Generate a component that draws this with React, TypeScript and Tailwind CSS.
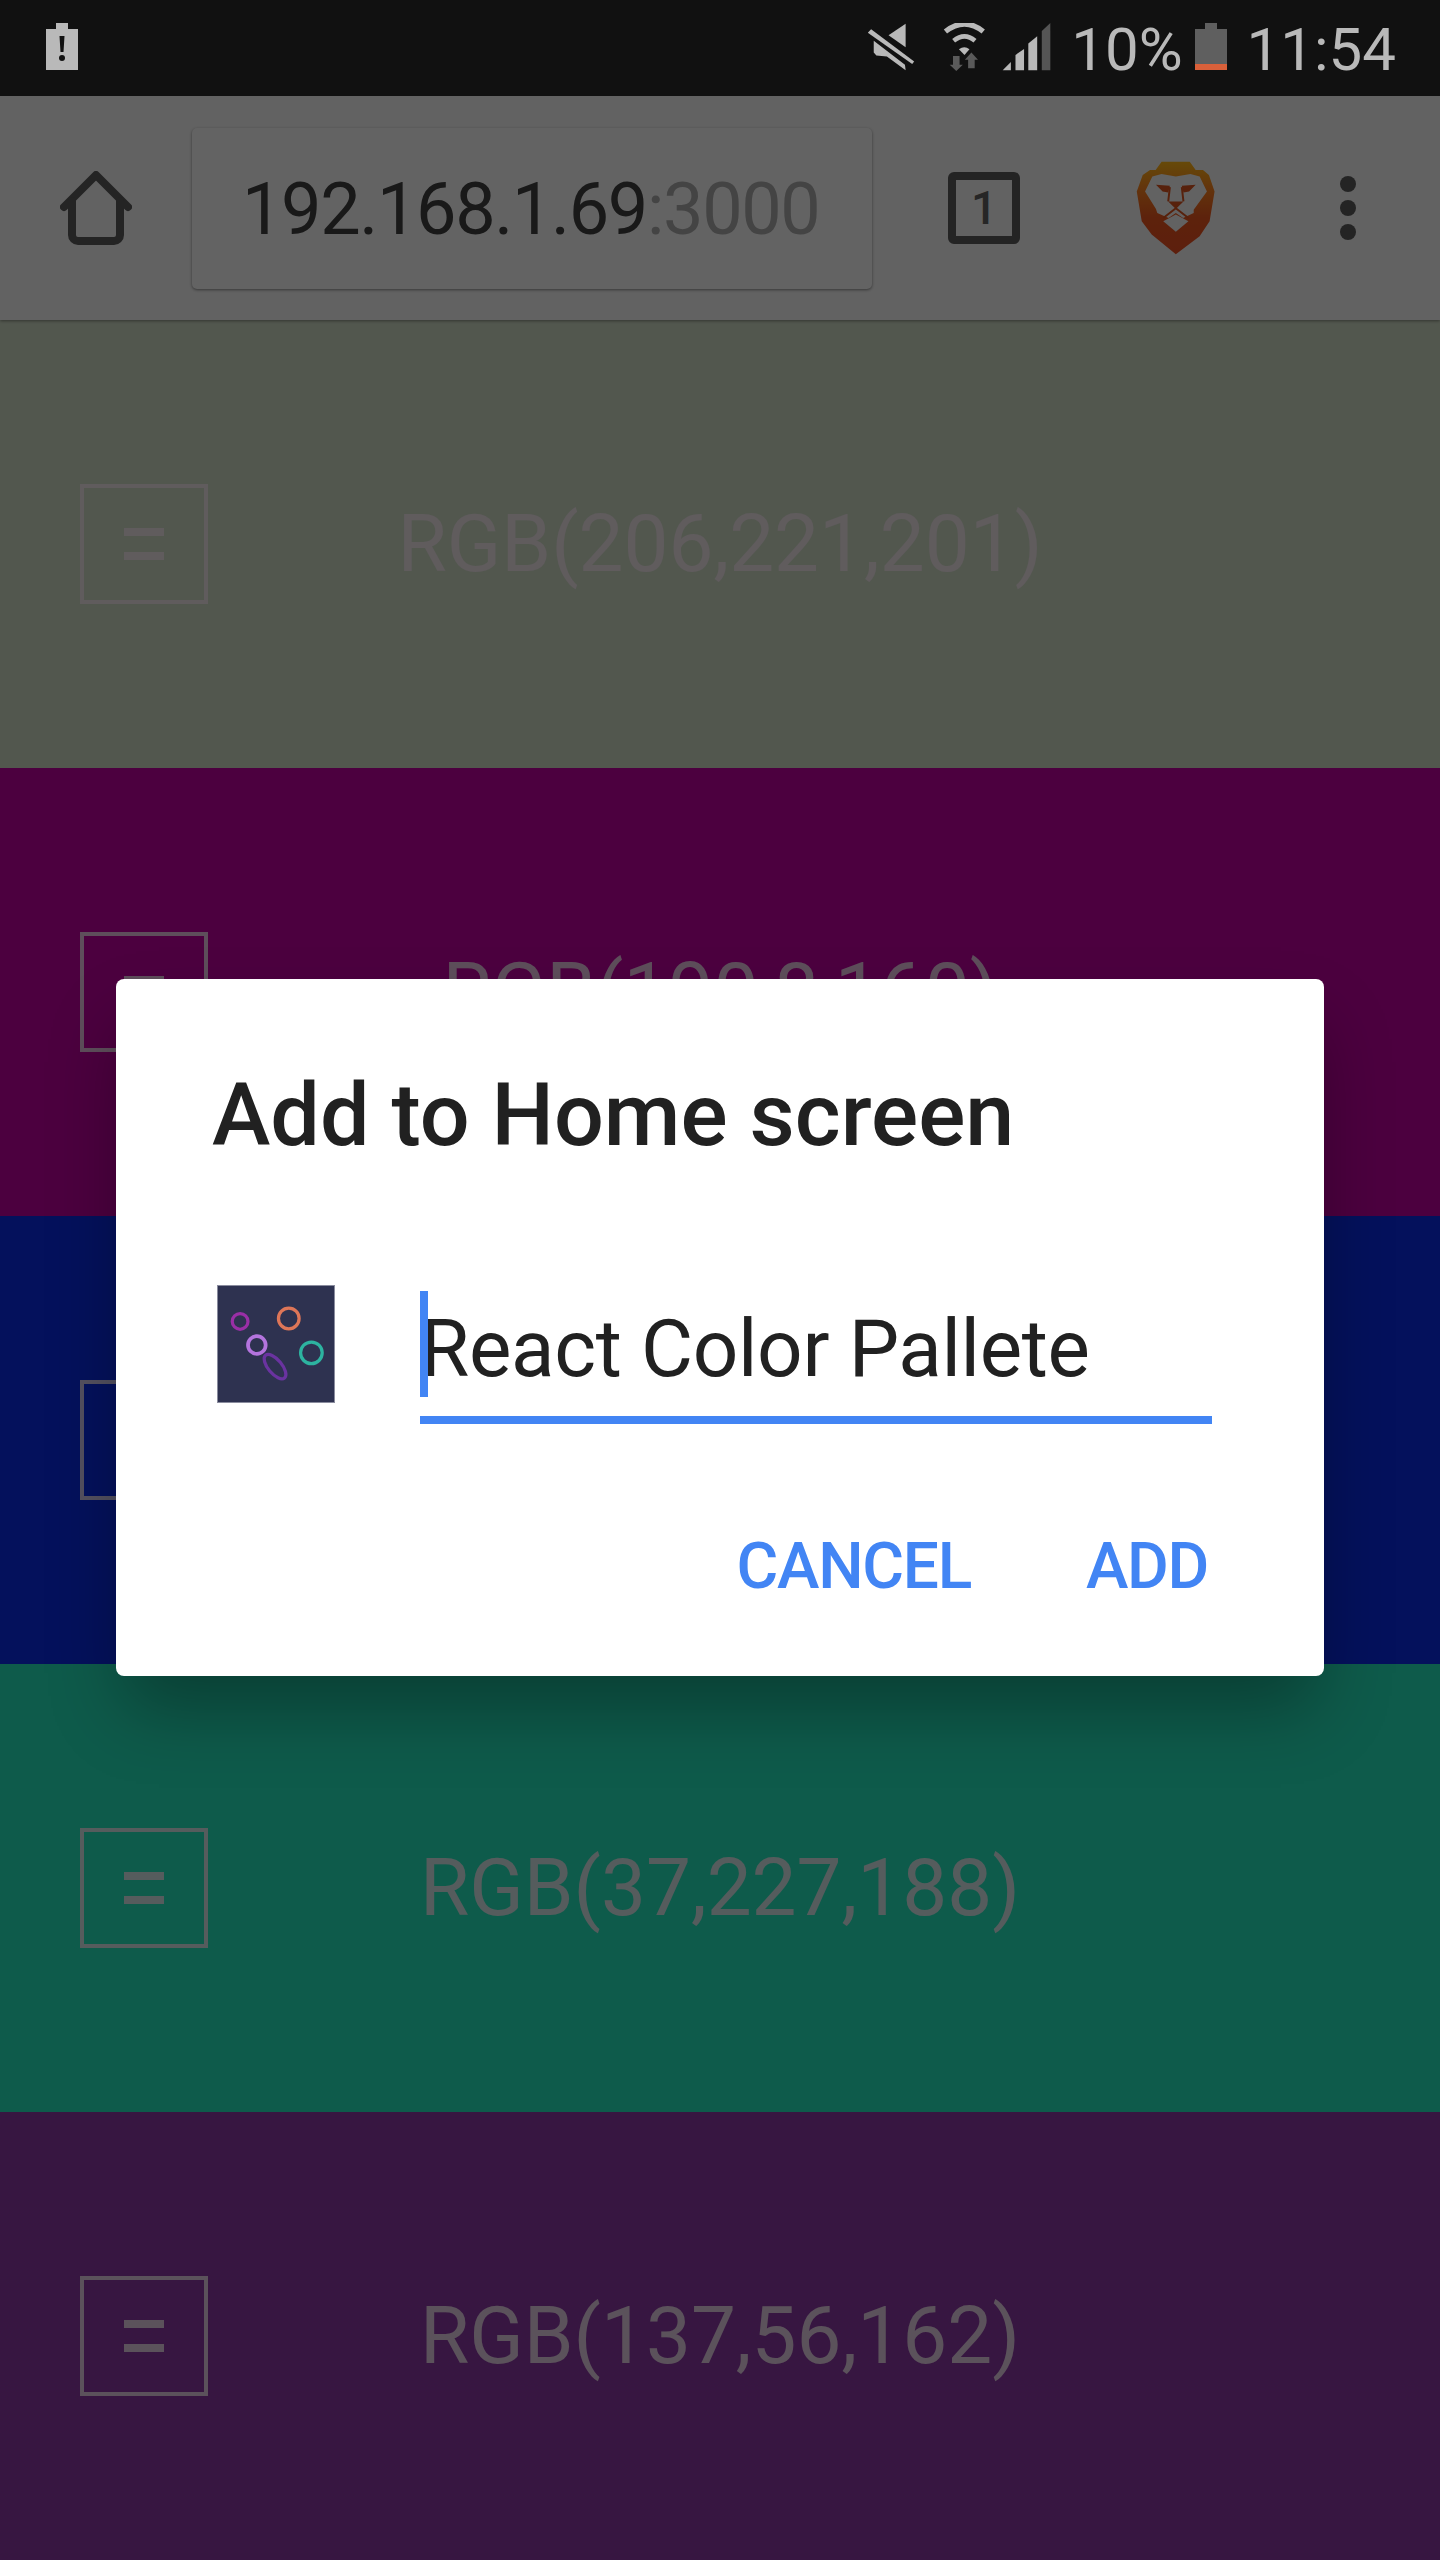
const bands = [
  { bg: "bg-[#cedac4]", text: "RGB(206,221,201)" },
  { bg: "bg-[#be009f]", text: "RGB(190,8,160)" },
  { bg: "bg-[#0c2be6]", text: "RGB(2,38,224)" },
  { bg: "bg-[#25e3bc]", text: "RGB(37,227,188)" },
  { bg: "bg-[#8938a2]", text: "RGB(137,56,162)" },
];

function BatteryAlert() {
  return (
    <svg width="32" height="47" viewBox="0 0 32 47">
      <path d="M10 0h12v6h10v41H0V6h10z" fill="#b9b9b9" />
      <path d="M13.5 13h5l-1 16h-3z" fill="#111" />
      <circle cx="16" cy="35" r="3" fill="#111" />
    </svg>
  );
}

function Mute() {
  return (
    <svg width="48" height="48" viewBox="50 38 145 146" fill="#b9b9b9">
      <path d="M115 75l52-35v72z" />
      <path d="M52 68l10-11 131 98-6 8z" />
      <path d="M70 92l95 73 2 17-57-42-32-3-8-9z" />
    </svg>
  );
}

function Wifi() {
  return (
    <svg width="43" height="48" viewBox="280 38 130 146" fill="none">
      <path d="M287 64Q345 18 402 64" stroke="#b9b9b9" strokeWidth="16" />
      <path d="M312 92Q345 65 377 92" stroke="#b9b9b9" strokeWidth="14" />
      <path d="M328 118Q345 106 360 118L345 135z" fill="#b9b9b9" />
      <path d="M310 138h20v27h10l-20 19-20-19h10z" fill="#5a5a5a" />
      <path d="M366 128l20 22h-10v26h-20v-26h-10z" fill="#5a5a5a" />
    </svg>
  );
}

function Signal() {
  return (
    <svg width="49" height="48" viewBox="455 38 149 146">
      <path d="M457 182l25-25v25z" fill="#b9b9b9" />
      <path d="M496 182v-47l26-18v65z" fill="#b9b9b9" />
      <path d="M535 182v-82l27-22v104z" fill="#b9b9b9" />
      <path d="M576 182V62l26-24v144z" fill="#555" />
    </svg>
  );
}

function Battery() {
  return (
    <svg width="32" height="47" viewBox="0 0 32 47">
      <path d="M10 0h12v6h10v35H0V6h10z" fill="#5f5f5f" />
      <path d="M0 41h32v6H0z" fill="#d9603a" />
    </svg>
  );
}

function HomeIcon() {
  return (
    <svg width="72" height="74" viewBox="0 0 72 74" fill="none" stroke="#5a5a5a" strokeWidth="8" strokeLinejoin="round" strokeLinecap="round">
      <path d="M4 36L36 4l32 32" />
      <path d="M12 30v34a6 6 0 0 0 6 6h36a6 6 0 0 0 6-6V30" />
    </svg>
  );
}

function TabIcon() {
  return (
    <div className="w-[72px] h-[72px] border-[8px] border-[#5a5a5a] rounded-md flex items-center justify-center">
      <span className="text-[46px] leading-none font-medium text-[#5f5f5f]">1</span>
    </div>
  );
}

function Lion() {
  return (
    <svg width="79" height="94" viewBox="48 33 238 284">
      <defs>
        <linearGradient id="lion" x1="0" y1="0" x2="0" y2="1">
          <stop offset="0" stopColor="#ffb816" />
          <stop offset="0.3" stopColor="#f7801f" />
          <stop offset="0.6" stopColor="#e8561f" />
          <stop offset="1" stopColor="#e84e22" />
        </linearGradient>
      </defs>
      <path d="M125 35h85l18 25h22l18 15 17 50-15 90-30 45-72 55-73-60-30-40-15-90 18-50 22-15h17z" fill="url(#lion)" />
      <path d="M97 80l28-8 43 8 44-8 28 8 22 45-40 55v10l-32 15-22-15-22 15-34-15-4-12-33-53z" fill="#f5f5f5" />
      <path d="M108 105l42 3-5 20-17-3zM228 105l-42 3 5 20 17-3z" fill="#d9531e" />
      <path d="M145 155h46l-23 23z" fill="#d9531e" />
      <path d="M150 112l-5 43M186 112l5 43" stroke="#d9531e" strokeWidth="6" fill="none" />
      <path d="M168 176l-38 29M168 176l38 29" stroke="#d9531e" strokeWidth="6" fill="none" />
      <path d="M130 215l38-20 38 20-38 32z" fill="#f5f5f5" />
    </svg>
  );
}

function AppIcon() {
  return (
    <svg width="118" height="118" viewBox="0 0 118 118" fill="none" strokeWidth="3.3" className="border border-[#8a8c9e] bg-[#2e3250]">
      <circle cx="22.5" cy="36" r="8" stroke="#9a2fa6" />
      <circle cx="72" cy="33" r="10.5" stroke="#de7658" />
      <circle cx="39.5" cy="60" r="9" stroke="#b474de" strokeWidth="3.8" />
      <circle cx="95" cy="68" r="11" stroke="#2db3a0" />
      <ellipse cx="58" cy="82" rx="15" ry="7" transform="rotate(50 58 82)" stroke="#6a33a0" />
    </svg>
  );
}

export default function App() {
  return (
    <div className="relative w-[1440px] h-[2560px] overflow-hidden font-['Roboto',sans-serif]">
      <div className="relative isolate">
        <div className="h-[96px]" />
        <div className="h-[224px] bg-[#f5f5f5] flex items-center pl-[60px] shadow-[0_1px_3px_rgba(0,0,0,0.4)] relative z-10">
          <HomeIcon />
          <div className="ml-[60px] w-[680px] h-[161px] rounded-[5px] bg-[#f8f8f8] shadow-[0_1px_3px_rgba(0,0,0,0.45)] flex items-center pl-[50px] pt-[3px] text-[72px] tracking-[-1.35px] text-[#404040] whitespace-nowrap">
            192.168.1.69<span className="text-[#aaaaaa]">:3000</span>
          </div>
          <div className="ml-[76px]">
            <TabIcon />
          </div>
          <div className="ml-[116px]">
            <Lion />
          </div>
          <div className="ml-[125px] flex flex-col gap-2">
            <div className="w-4 h-4 rounded-full bg-[#5a5a5a]" />
            <div className="w-4 h-4 rounded-full bg-[#5a5a5a]" />
            <div className="w-4 h-4 rounded-full bg-[#5a5a5a]" />
          </div>
        </div>
        {bands.map((b) => (
          <div key={b.text} className={`relative h-[448px] flex items-center justify-center ${b.bg}`}>
            <div className="absolute left-[80px] w-[128px] h-[120px] border-4 border-[#f5e6f0]/85 flex flex-col items-center justify-center gap-4">
              <div className="w-10 h-2 bg-[#f5e6f0]/85" />
              <div className="w-10 h-2 bg-[#f5e6f0]/85" />
            </div>
            <span className="text-[80px] text-[#f5e6f0]/85">{b.text}</span>
          </div>
        ))}
      </div>

      <div className="absolute inset-0 bg-black/60" />

      <div className="absolute top-0 left-0 right-0 h-[96px] bg-[#111] flex items-start pl-[46px] pr-[44px] pt-[23px] text-[60px] leading-[47px] text-[#b9b9b9]">
        <BatteryAlert />
        <div className="ml-auto flex items-start">
          <Mute />
          <div className="ml-[28px]"><Wifi /></div>
          <div className="ml-4"><Signal /></div>
          <span className="ml-[20px] mt-[3px]">10%</span>
          <div className="ml-[12px]"><Battery /></div>
          <span className="ml-[20px] mt-[3px]">11:54</span>
        </div>
      </div>

      <div className="absolute left-[116px] top-[979px] w-[1208px] h-[697px] bg-white rounded-lg shadow-[0_40px_70px_-8px_rgba(0,0,0,0.32)] pl-[96px] pr-[112px] pt-[86px] text-[#212121]">
        <div className="text-[88px] leading-[100px] font-medium whitespace-nowrap">Add to Home screen</div>
        <div className="flex items-start mt-[120px]">
          <div className="ml-[5px]"><AppIcon /></div>
          <div className="ml-[85px] flex-1 h-[139px] border-b-[8px] border-[#4285f4] relative">
            <div className="absolute left-0 top-[6px] w-[8px] h-[106px] bg-[#4285f4]" />
            <div className="text-[80px] leading-[94px] pt-[17px] tracking-[-0.35px] whitespace-nowrap">React Color Pallete</div>
          </div>
        </div>
        <div className="flex justify-end gap-[115px] mt-[105px] text-[64px] leading-[75px] font-medium tracking-[-1.3px] text-[#4285f4] pr-[4px]">
          <span>CANCEL</span>
          <span>ADD</span>
        </div>
      </div>
    </div>
  );
}
